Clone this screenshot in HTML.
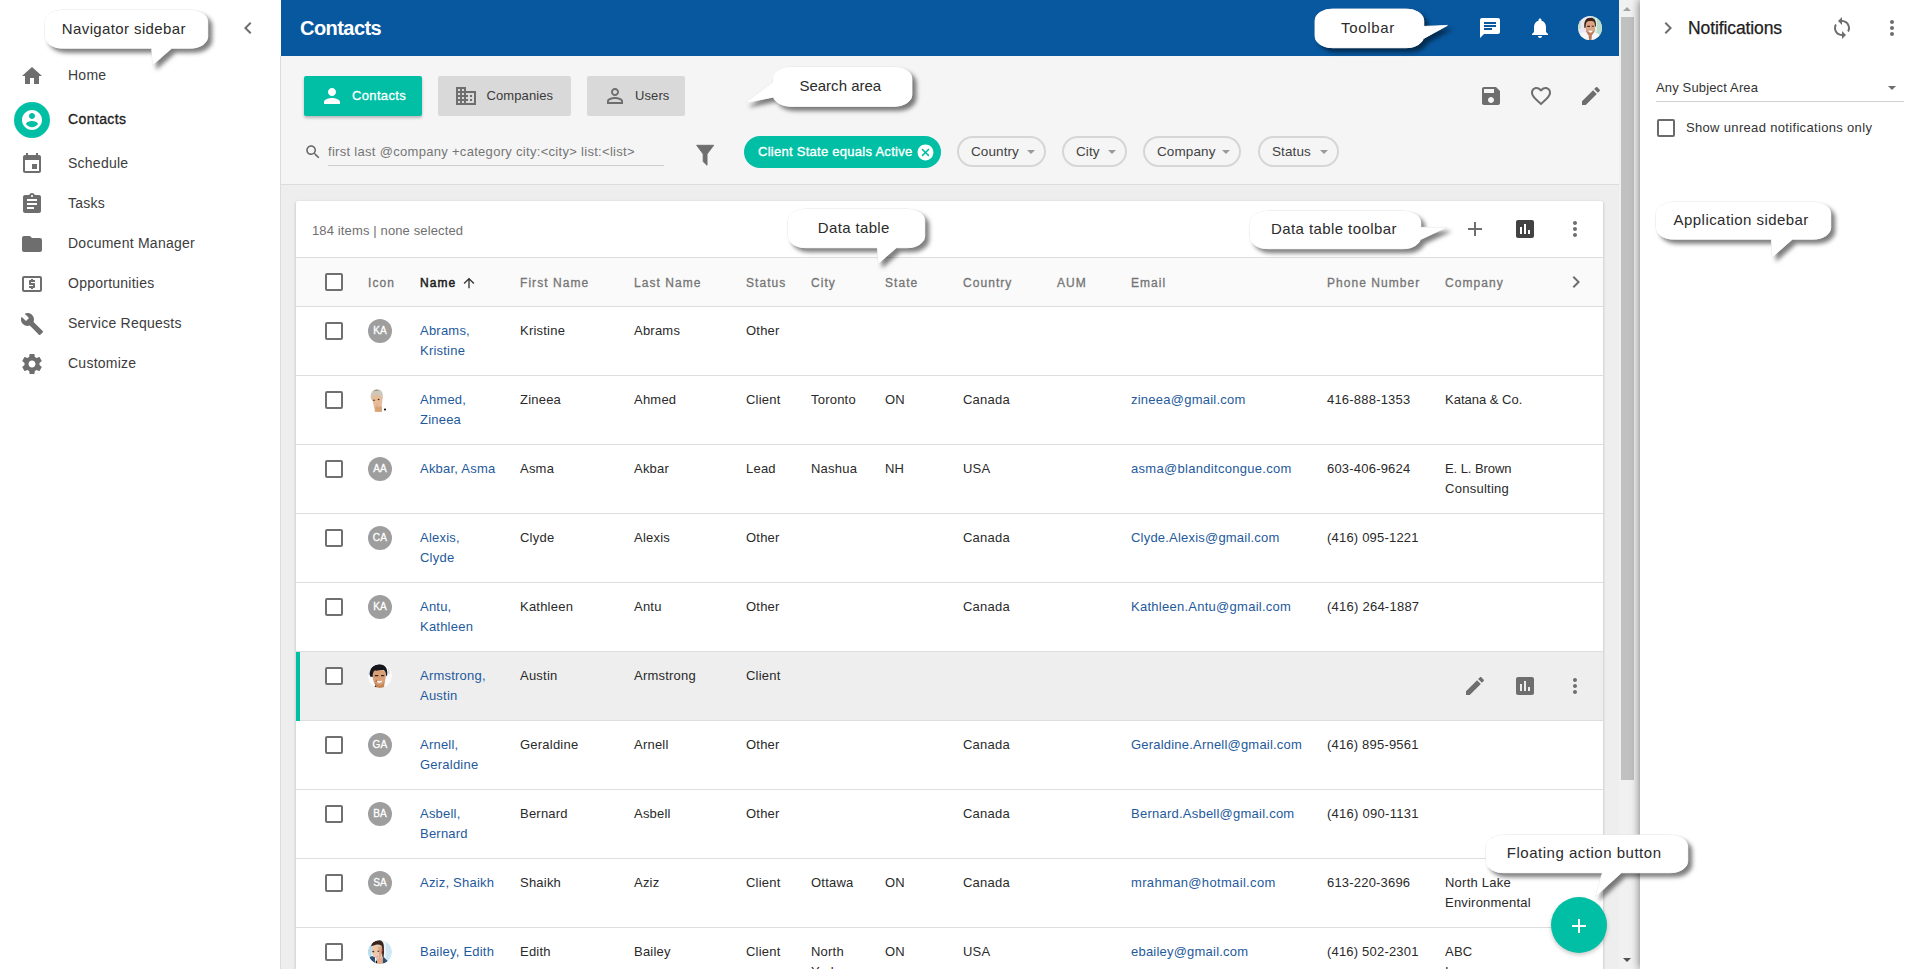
<!DOCTYPE html>
<html><head><meta charset="utf-8">
<style>
*{box-sizing:border-box;margin:0;padding:0}
html,body{width:1920px;height:969px;overflow:hidden;background:#fff;font-family:"Liberation Sans",sans-serif;color:#212121;font-size:13px}
.abs{position:absolute}
#nav{position:absolute;left:0;top:0;width:281px;height:969px;background:#fff}
#nav:after{content:"";position:absolute;left:280px;top:56px;width:1px;height:913px;background:#dcdcdc}
.ni{position:absolute;left:68px;font-size:14px;color:#3c3c3c;letter-spacing:.25px;line-height:20px;white-space:nowrap}
.nic{position:absolute;left:20px;width:24px;height:24px;fill:#6e6e6e}
#hdr{position:absolute;left:281px;top:0;width:1338px;height:56px;background:#08589f}
#hdr h1{position:absolute;left:19px;top:15px;font-size:20px;line-height:26px;font-weight:bold;color:#fff;letter-spacing:-.55px}
#search{position:absolute;left:281px;top:56px;width:1338px;height:129px;background:#f5f5f5;border-bottom:1px solid #dcdcdc}
#main{position:absolute;left:281px;top:185px;width:1338px;height:784px;background:#eeeeee}
#sb{position:absolute;left:1619px;top:0;width:21px;height:969px;background:#f1f1f1}
#sb .th{position:absolute;left:2px;top:17px;width:13px;height:763px;background:#c1c1c1}
#side{position:absolute;left:1640px;top:0;width:280px;height:969px;background:#fff;box-shadow:0 0 9px rgba(0,0,0,.55)}
.tab{position:absolute;top:20px;height:40px;border-radius:2px;font-size:13px;letter-spacing:.1px;line-height:40px;color:#3a3a3a;background:#d9d9d9;white-space:nowrap}
.tab span{position:absolute;top:0}
.tab svg{position:absolute;top:8px;width:24px;height:24px;fill:#6e6e6e}
.chip{position:absolute;top:80px;height:31px;border:2px solid #d6d6d6;border-radius:16px;font-size:13.5px;line-height:27px;color:#424242;padding-left:12px;letter-spacing:.1px;background:#f5f5f5;white-space:nowrap}
.chip i{position:absolute;right:9px;top:12px;border:4px solid transparent;border-top:4px solid #9a9a9a;border-bottom:0}
#card{position:absolute;left:296px;top:201px;width:1307px;height:768px;overflow:hidden;background:#fff;border-radius:2px 2px 0 0;box-shadow:0 1px 3px rgba(0,0,0,.25)}
#th{position:absolute;left:0;top:56px;width:1307px;height:50px;background:#fafafa;border-top:1px solid #dedede;border-bottom:1px solid #dedede}
#th span{position:absolute;top:16px;font-size:12px;line-height:18px;color:#757575;letter-spacing:1.05px;-webkit-text-stroke:.3px #757575;white-space:nowrap}
.row{position:absolute;left:0;width:1307px;height:69px;border-bottom:1px solid #dedede}
.row span{position:absolute;top:14px;font-size:13px;line-height:20px;color:#2a2a2a;letter-spacing:.22px}
.row span.l{color:#1e5a9c}
.cb{position:absolute;left:29px;top:15px;width:18px;height:18px;border:2px solid #707070;border-radius:2px;background:#fff}
.av{position:absolute;left:72px;top:12px;width:24px;height:24px;border-radius:50%;background:#9e9e9e;color:#fff;font-size:10px;-webkit-text-stroke:.3px #fff;letter-spacing:.2px;line-height:24px;text-align:center;overflow:hidden}
.co{position:absolute;background:#fff;border-radius:12px;font-size:16px;color:#2b2b2b;text-align:center;box-shadow:3px 4px 4px rgba(0,0,0,.45),0 0 3px rgba(0,0,0,.25)}
.c1{left:72px}.c2{left:124px}.c3{left:224px}.c4{left:338px}.c5{left:450px}.c6{left:515px}.c7{left:589px}.c8{left:667px}.c9{left:761px}.c10{left:835px}.c11{left:1031px}.c12{left:1149px}
</style></head><body>
<div id="nav">
<svg class="nic" style="left:236px;top:16px" viewBox="0 0 24 24"><path d="M15.41 7.41L14 6l-6 6 6 6 1.41-1.41L10.83 12z"/></svg>
<svg class="nic" style="top:64px" viewBox="0 0 24 24"><path d="M10 20v-6h4v6h5v-8h3L12 3 2 12h3v8z"/></svg>
<div class="abs" style="left:14px;top:102px;width:36px;height:36px;border-radius:50%;background:#00bfa5"></div>
<svg class="nic" style="top:108px;fill:#fff" viewBox="0 0 24 24"><path d="M12 2C6.48 2 2 6.48 2 12s4.48 10 10 10 10-4.48 10-10S17.52 2 12 2zm0 3c1.66 0 3 1.34 3 3s-1.34 3-3 3-3-1.34-3-3 1.34-3 3-3zm0 14.2c-2.5 0-4.71-1.28-6-3.22.03-1.99 4-3.08 6-3.08 1.99 0 5.97 1.09 6 3.08-1.29 1.94-3.5 3.22-6 3.22z"/></svg>
<svg class="nic" style="top:152px" viewBox="0 0 24 24"><path d="M17 12h-5v5h5v-5zM16 1v2H8V1H6v2H5c-1.11 0-1.99.9-1.99 2L3 19c0 1.1.89 2 2 2h14c1.1 0 2-.9 2-2V5c0-1.1-.9-2-2-2h-1V1h-2zm3 18H5V8h14v11z"/></svg>
<svg class="nic" style="top:192px" viewBox="0 0 24 24"><path d="M19 3h-4.18C14.4 1.84 13.3 1 12 1c-1.3 0-2.4.84-2.82 2H5c-1.1 0-2 .9-2 2v14c0 1.1.9 2 2 2h14c1.1 0 2-.9 2-2V5c0-1.1-.9-2-2-2zm-7 0c.55 0 1 .45 1 1s-.45 1-1 1-1-.45-1-1 .45-1 1-1zm2 14H7v-2h7v2zm3-4H7v-2h10v2zm0-4H7V7h10v2z"/></svg>
<svg class="nic" style="top:232px" viewBox="0 0 24 24"><path d="M10 4H4c-1.1 0-1.99.9-1.99 2L2 18c0 1.1.9 2 2 2h16c1.1 0 2-.9 2-2V8c0-1.1-.9-2-2-2h-8l-2-2z"/></svg>
<svg class="nic" style="top:272px" viewBox="0 0 24 24"><path d="M11 17h2v-1h1c.55 0 1-.45 1-1v-3c0-.55-.45-1-1-1h-3v-1h4V8h-2V7h-2v1h-1c-.55 0-1 .45-1 1v3c0 .55.45 1 1 1h3v1H9v2h2v1zm9-13H4c-1.11 0-1.99.89-1.99 2L2 18c0 1.11.89 2 2 2h16c1.11 0 2-.89 2-2V6c0-1.11-.89-2-2-2zm0 14H4V6h16v12z"/></svg>
<svg class="nic" style="top:312px" viewBox="0 0 24 24"><path d="M22.7 19l-9.1-9.1c.9-2.3.4-5-1.5-6.9-2-2-5-2.4-7.4-1.3L9 6 6 9 1.6 4.7C.4 7.1.9 10.1 2.9 12.1c1.9 1.9 4.6 2.4 6.9 1.5l9.1 9.1c.4.4 1 .4 1.4 0l2.3-2.3c.5-.4.5-1.1.1-1.4z"/></svg>
<svg class="nic" style="top:352px" viewBox="0 0 24 24"><path d="M19.43 12.98c.04-.32.07-.64.07-.98s-.03-.66-.07-.98l2.11-1.65c.19-.15.24-.42.12-.64l-2-3.46c-.12-.22-.39-.3-.61-.22l-2.49 1c-.52-.4-1.08-.73-1.69-.98l-.38-2.65C14.46 2.18 14.25 2 14 2h-4c-.25 0-.46.18-.49.42l-.38 2.65c-.61.25-1.17.59-1.69.98l-2.49-1c-.23-.09-.49 0-.61.22l-2 3.46c-.13.22-.07.49.12.64l2.11 1.65c-.04.32-.07.65-.07.98s.03.66.07.98l-2.11 1.65c-.19.15-.24.42-.12.64l2 3.46c.12.22.39.3.61.22l2.49-1c.52.4 1.08.73 1.69.98l.38 2.65c.03.24.24.42.49.42h4c.25 0 .46-.18.49-.42l.38-2.65c.61-.25 1.17-.59 1.69-.98l2.49 1c.23.09.49 0 .61-.22l2-3.46c.12-.22.07-.49-.12-.64l-2.11-1.65zM12 15.5c-1.93 0-3.5-1.57-3.5-3.5s1.57-3.5 3.5-3.5 3.5 1.57 3.5 3.5-1.57 3.5-3.5 3.5z"/></svg>
<div class="ni" style="top:65px">Home</div>
<div class="ni" style="top:109px;color:#1f1f1f;letter-spacing:.4px;-webkit-text-stroke:.35px #1f1f1f">Contacts</div>
<div class="ni" style="top:153px">Schedule</div>
<div class="ni" style="top:193px">Tasks</div>
<div class="ni" style="top:233px">Document Manager</div>
<div class="ni" style="top:273px">Opportunities</div>
<div class="ni" style="top:313px">Service Requests</div>
<div class="ni" style="top:353px">Customize</div>
</div>
<div id="hdr"><h1>Contacts</h1>
<svg class="abs" style="left:1197px;top:16px;width:24px;height:24px;fill:#fff" viewBox="0 0 24 24"><path d="M20 2H4c-1.1 0-1.99.9-1.99 2L2 22l4-4h14c1.1 0 2-.9 2-2V4c0-1.1-.9-2-2-2zM6 9h12v2H6V9zm8 5H6v-2h8v2zm4-6H6V6h12v2z"/></svg>
<svg class="abs" style="left:1247px;top:16px;width:24px;height:24px;fill:#fff" viewBox="0 0 24 24"><path d="M12 22c1.1 0 2-.9 2-2h-4c0 1.1.89 2 2 2zm6-6v-5c0-3.07-1.64-5.64-4.5-6.32V4c0-.83-.67-1.5-1.5-1.5s-1.5.67-1.5 1.5v.68C7.63 5.36 6 7.92 6 11v5l-2 2v1h16v-1l-2-2z"/></svg>
<svg class="abs" style="left:1297px;top:16px;width:24px;height:24px" viewBox="0 0 24 24"><defs><clipPath id="avc"><circle cx="12" cy="12" r="12"/></clipPath><filter id="b0" x="-20%" y="-20%" width="140%" height="140%"><feGaussianBlur stdDeviation=".45"/></filter></defs><g clip-path="url(#avc)"><rect width="24" height="24" fill="#ece8f1"/><g filter="url(#b0)"><rect x="14" y="0" width="10" height="20" fill="#b9dccb"/><rect x="0" y="3" width="2.500" height="10" fill="#c5e2c0"/><rect x="17" y="2" width="2" height="14" fill="#d9ede3"/><path d="M0 24c0-5 3-8 8-8l4 4 3-4c4 0 7 2 8 8z" fill="#f7f6f8"/><path d="M10.500 18h3.500l-.5 6h-2.500z" fill="#b77a5c"/><path d="M7.400 9c0-3 2-4.500 5-4.500s4.800 1.500 4.800 4.500c0 4-.5 6-1.500 8-1 1.800-2.200 2.500-3.500 2.500s-2.500-1-3.500-3c-.8-2-1.300-4-1.300-7.500z" fill="#dba585"/><path d="M8 13.500c.5 3 2 6 4.200 6s3.500-2.500 4.300-6c-.8 2-2.300 3-4.300 3s-3.400-1-4.200-3z" fill="#b97b5e"/><path d="M6.300 11.500C5.800 5 8 1.800 12.300 1.800c4 0 6.200 2.500 5.600 9l-.9-.5c0-3-.8-4.500-2-5-1.500-.3-4-.3-5.500.2-1.500.8-1.800 2.500-1.800 5.500l-.7 1.200z" fill="#3b2219"/><path d="M9.300 9.800h2.600v1.100H9.300zM13.800 9.800h2v1h-2z" fill="#3a1f18"/><path d="M10.600 14.800h3.900c-.3 1.300-1 1.800-2 1.800s-1.600-.5-1.900-1.800z" fill="#fff"/></g></g></svg>
</div>
<div id="search">
<div class="tab" style="left:23px;width:118px;background:#00bfa5;color:#fff;box-shadow:0 2px 3px rgba(0,0,0,.25)"><svg style="left:16px;fill:#fff" viewBox="0 0 24 24"><path d="M12 12c2.210 0 4-1.790 4-4s-1.790-4-4-4-4 1.790-4 4 1.790 4 4 4zm0 2c-2.670 0-8 1.340-8 4v2h16v-2c0-2.660-5.330-4-8-4z"/></svg><span style="left:48px;letter-spacing:.35px;-webkit-text-stroke:.3px #fff">Contacts</span></div>
<div class="tab" style="left:157px;width:133px"><svg style="left:16px" viewBox="0 0 24 24"><path d="M12 7V3H2v18h20V7H12zM6 19H4v-2h2v2zm0-4H4v-2h2v2zm0-4H4V9h2v2zm0-4H4V5h2v2zm4 12H8v-2h2v2zm0-4H8v-2h2v2zm0-4H8V9h2v2zm0-4H8V5h2v2zm10 12h-8v-2h2v-2h-2v-2h2v-2h-2V9h8v10zm-2-8h-2v2h2v-2zm0 4h-2v2h2v-2z"/></svg><span style="left:48.5px">Companies</span></div>
<div class="tab" style="left:306px;width:98px"><svg style="left:16px" viewBox="0 0 24 24"><path d="M12 5.900c1.160 0 2.100.940 2.100 2.100s-.940 2.100-2.100 2.100S9.900 9.160 9.900 8s.940-2.100 2.100-2.100m0 9c2.970 0 6.100 1.460 6.100 2.100v1.100H5.900V17c0-.640 3.130-2.100 6.100-2.100M12 4C9.790 4 8 5.790 8 8s1.790 4 4 4 4-1.790 4-4-1.790-4-4-4zm0 9c-2.670 0-8 1.340-8 4v3h16v-3c0-2.660-5.330-4-8-4z"/></svg><span style="left:48px">Users</span></div>
<svg class="abs" style="left:1198px;top:28px;width:24px;height:24px;fill:#6e6e6e" viewBox="0 0 24 24"><path d="M17 3H5c-1.110 0-2 .900-2 2v14c0 1.100.890 2 2 2h14c1.100 0 2-.900 2-2V7l-4-4zm-5 16c-1.660 0-3-1.340-3-3s1.340-3 3-3 3 1.340 3 3-1.340 3-3 3zm3-10H5V5h10v4z"/></svg>
<svg class="abs" style="left:1248px;top:28px;width:24px;height:24px;fill:#6e6e6e" viewBox="0 0 24 24"><path d="M16.500 3c-1.740 0-3.410.810-4.500 2.090C10.910 3.810 9.240 3 7.500 3 4.420 3 2 5.420 2 8.500c0 3.780 3.400 6.860 8.550 11.540L12 21.350l1.450-1.320C18.600 15.360 22 12.280 22 8.500 22 5.420 19.580 3 16.500 3zm-4.400 15.550l-.1.100-.1-.1C7.140 14.240 4 11.390 4 8.500 4 6.500 5.500 5 7.500 5c1.540 0 3.040.990 3.570 2.360h1.870C13.460 5.990 14.960 5 16.500 5c2 0 3.500 1.500 3.500 3.500 0 2.890-3.140 5.740-7.900 10.050z"/></svg>
<svg class="abs" style="left:1298px;top:28px;width:24px;height:24px;fill:#6e6e6e" viewBox="0 0 24 24"><path d="M3 17.250V21h3.750L17.810 9.940l-3.750-3.750L3 17.250zM20.710 7.040c.390-.390.390-1.020 0-1.410l-2.340-2.340c-.390-.390-1.020-.390-1.410 0l-1.830 1.830 3.750 3.750 1.830-1.830z"/></svg>
<svg class="abs" style="left:22.5px;top:86.5px;width:18px;height:18px;fill:#666" viewBox="0 0 24 24"><path d="M15.500 14h-.790l-.280-.270C15.410 12.590 16 11.110 16 9.500 16 5.910 13.090 3 9.500 3S3 5.910 3 9.500 5.910 16 9.500 16c1.610 0 3.090-.590 4.230-1.570l.270.280v.790l5 4.990L20.490 19l-4.990-5zm-6 0C7.010 14 5 11.990 5 9.500S7.010 5 9.500 5 14 7.010 14 9.500 11.990 14 9.500 14z"/></svg>
<div class="abs" style="left:47px;top:86px;font-size:13px;line-height:20px;color:#757575;letter-spacing:.3px;white-space:nowrap">first last @company +category city:&lt;city&gt; list:&lt;list&gt;</div>
<div class="abs" style="left:47px;top:109px;width:336px;height:1px;background:#cdcdcd"></div>
<svg class="abs" style="left:414px;top:88px;width:20px;height:22px" viewBox="0 0 20 22"><path d="M1.700 1.300H18.700L12 10V21.200L8.200 17.600V10Z" fill="#6e6e6e" stroke="#6e6e6e" stroke-width="1" stroke-linejoin="round"/></svg>
<div class="abs" style="left:463px;top:80px;width:197px;height:32px;border-radius:16px;background:#00bfa5"></div>
<div class="abs" style="left:477px;top:86px;font-size:13px;line-height:20px;color:#fff;letter-spacing:.27px;white-space:nowrap;-webkit-text-stroke:.35px #fff">Client State equals Active</div>
<svg class="abs" style="left:634.8px;top:86.5px;width:19px;height:19px;fill:#fff" viewBox="0 0 24 24"><path d="M12 2C6.470 2 2 6.470 2 12s4.470 10 10 10 10-4.470 10-10S17.530 2 12 2zm5 13.590L15.590 17 12 13.410 8.410 17 7 15.590 10.590 12 7 8.410 8.410 7 12 10.590 15.590 7 17 8.410 13.410 12 17 15.590z"/></svg>
<div class="chip" style="left:676px;width:89px">Country<i></i></div>
<div class="chip" style="left:781px;width:65px">City<i></i></div>
<div class="chip" style="left:862px;width:98px">Company<i></i></div>
<div class="chip" style="left:977px;width:81px">Status<i></i></div>
</div>
<div id="main"></div>
<div id="card">
<div class="abs" style="left:16px;top:20px;font-size:13px;line-height:20px;color:#707070;letter-spacing:.13px;white-space:nowrap">184 items | none selected</div>
<svg class="abs" style="left:1167px;top:16px;width:24px;height:24px;fill:#6e6e6e" viewBox="0 0 24 24"><path d="M19 13h-6v6h-2v-6H5v-2h6V5h2v6h6v2z"/></svg><svg class="abs" style="left:1217px;top:16px;width:24px;height:24px;fill:#424242" viewBox="0 0 24 24"><path d="M19 3H5c-1.100 0-2 .900-2 2v14c0 1.100.900 2 2 2h14c1.100 0 2-.900 2-2V5c0-1.100-.900-2-2-2zM9 17H7v-7h2v7zm4 0h-2V7h2v10zm4 0h-2v-4h2v4z"/></svg><svg class="abs" style="left:1267px;top:16px;width:24px;height:24px;fill:#6e6e6e" viewBox="0 0 24 24"><path d="M12 8c1.100 0 2-.900 2-2s-.900-2-2-2-2 .900-2 2 .900 2 2 2zm0 2c-1.100 0-2 .900-2 2s.900 2 2 2 2-.900 2-2-.900-2-2-2zm0 6c-1.100 0-2 .900-2 2s.900 2 2 2 2-.900 2-2-.900-2-2-2z"/></svg>
<div id="th"><div class="cb" style="top:15px"></div>
<span class="c1">Icon</span>
<span class="c2" style="color:#212121;-webkit-text-stroke:.5px #212121">Name</span>
<span class="c3">First Name</span>
<span class="c4">Last Name</span>
<span class="c5">Status</span>
<span class="c6">City</span>
<span class="c7">State</span>
<span class="c8">Country</span>
<span class="c9">AUM</span>
<span class="c10">Email</span>
<span class="c11">Phone Number</span>
<span class="c12">Company</span>
<svg class="abs" style="left:165px;top:17px;width:16px;height:16px;fill:#333" viewBox="0 0 24 24"><path d="M4 12l1.410 1.410L11 7.830V20h2V7.830l5.580 5.590L20 12l-8-8-8 8z"/></svg>
<svg class="abs" style="left:1268px;top:12px;width:24px;height:24px;fill:#6e6e6e" viewBox="0 0 24 24"><path d="M10 6L8.590 7.410 13.170 12l-4.580 4.590L10 18l6-6z"/></svg>
</div>
<div class="row" style="top:106px">
<div class="cb"></div>
<div class="av">KA</div>
<span class="c2 l">Abrams,<br>Kristine</span>
<span class="c3">Kristine</span>
<span class="c4">Abrams</span>
<span class="c5">Other</span>
</div>
<div class="row" style="top:175px">
<div class="cb"></div>
<svg class="av" style="background:none;border-radius:0" viewBox="0 0 24 24"><defs><filter id="b1" x="-20%" y="-20%" width="140%" height="140%"><feGaussianBlur stdDeviation=".45"/></filter></defs><g filter="url(#b1)"><path d="M3 11C1.500 5 5 1 9 1.200c4-.5 6.500 3.300 5.800 8.800l-1.500 3-8.300.5z" fill="#cfc8ba"/><path d="M5.500 3.500C7 1.500 10 1.300 11.500 2.500c-2-.3-4 .2-6 1z" fill="#8d8882"/><path d="M4.600 10c0-2.500 2-3.500 5-3 2.500.3 4.700 1.200 4.700 3.500 0 4-.3 6-.8 8.500l.5 4.800H6.800c0-3-2.200-8.300-2.200-13.800z" fill="#e6bd98"/><path d="M7.500 18c2 1 4.500 1 6-.2l.5 6H7z" fill="#d7a376"/><ellipse cx="6" cy="12.300" rx="1.300" ry=".8" fill="#7a5535"/><ellipse cx="10.600" cy="11.500" rx=".9" ry=".8" fill="#4a1f1a"/><path d="M8.200 15.500c.8.600 1.500.700 2.200.100l-.4 2.200c-.7.300-1.200.2-1.800-.3z" fill="#e9a9a0"/></g><circle cx="17" cy="21.500" r="1.100" fill="#0a0a0a"/></svg>
<span class="c2 l">Ahmed,<br>Zineea</span>
<span class="c3">Zineea</span>
<span class="c4">Ahmed</span>
<span class="c5">Client</span>
<span class="c6">Toronto</span>
<span class="c7">ON</span>
<span class="c8">Canada</span>
<span class="c10 l"><b style="font-weight:normal;letter-spacing:0.237px">zineea@gmail.com</b></span>
<span class="c11"><b style="font-weight:normal;letter-spacing:0.203px">416-888-1353</b></span>
<span class="c12"><b style="font-weight:normal;letter-spacing:-0.003px">Katana &amp; Co.</b></span>
</div>
<div class="row" style="top:244px">
<div class="cb"></div>
<div class="av">AA</div>
<span class="c2 l">Akbar, Asma</span>
<span class="c3">Asma</span>
<span class="c4">Akbar</span>
<span class="c5">Lead</span>
<span class="c6">Nashua</span>
<span class="c7">NH</span>
<span class="c8">USA</span>
<span class="c10 l"><b style="font-weight:normal;letter-spacing:0.299px">asma@blanditcongue.com</b></span>
<span class="c11"><b style="font-weight:normal;letter-spacing:0.203px">603-406-9624</b></span>
<span class="c12"><b style="font-weight:normal;letter-spacing:-0.070px">E. L. Brown</b><br><b style="font-weight:normal;letter-spacing:0.262px">Consulting</b></span>
</div>
<div class="row" style="top:313px">
<div class="cb"></div>
<div class="av">CA</div>
<span class="c2 l">Alexis,<br>Clyde</span>
<span class="c3">Clyde</span>
<span class="c4">Alexis</span>
<span class="c5">Other</span>
<span class="c8">Canada</span>
<span class="c10 l"><b style="font-weight:normal;letter-spacing:0.206px">Clyde.Alexis@gmail.com</b></span>
<span class="c11"><b style="font-weight:normal;letter-spacing:0.200px">(416) 095-1221</b></span>
</div>
<div class="row" style="top:382px">
<div class="cb"></div>
<div class="av">KA</div>
<span class="c2 l">Antu,<br>Kathleen</span>
<span class="c3">Kathleen</span>
<span class="c4">Antu</span>
<span class="c5">Other</span>
<span class="c8">Canada</span>
<span class="c10 l"><b style="font-weight:normal;letter-spacing:0.263px">Kathleen.Antu@gmail.com</b></span>
<span class="c11"><b style="font-weight:normal;letter-spacing:0.246px">(416) 264-1887</b></span>
</div>
<div class="row" style="top:451px;background:#eeeeee">
<div class="abs" style="left:0;top:0;width:4px;height:69px;background:#00bfa5"></div>
<div class="cb"></div>
<svg class="av" style="background:none" viewBox="0 0 24 24"><defs><clipPath id="c2"><circle cx="12" cy="12" r="12"/></clipPath><filter id="b2" x="-20%" y="-20%" width="140%" height="140%"><feGaussianBlur stdDeviation=".45"/></filter></defs><g clip-path="url(#c2)"><rect width="24" height="24" fill="#fbfbfd"/><g filter="url(#b2)"><path d="M20 4c1.500 1.500 2 4 1.500 6l-1.500-.5z" fill="#d9d4d6"/><path d="M0 10l2-4v5z" fill="#b9c6d6"/><path d="M4.400 10c0-3 3-4.300 7-4.300s6.300 1.300 6.300 4.300c0 6-1 9-2 11.500l.3 3H7.500l.3-3c-1.700-2.500-3.400-6-3.400-11.500z" fill="#d9a077"/><path d="M6.500 17c1.500 3 3.500 4 5.500 4s3.500-1.500 4.500-4l-.5 7.500H7.500z" fill="#c48759"/><path d="M2 12.500C1 5 4.500 .3 11 .3c5.500 0 9 3.200 8.200 10.700l-1.300 1.500c.3-4-1-6.500-3-6.500-3 0-6.500 1-8 .5-1.700.5-2.200 3-2.200 6.500z" fill="#15171c"/><path d="M6.800 11h3.500v1.300H6.800zM13 11h3.300v1.200H13z" fill="#3a2018"/><path d="M8.500 16.800c1.200.6 4.300.6 5.800-.2-.3 1.500-1.600 2.200-3 2.200s-2.500-.7-2.800-2z" fill="#fff"/><path d="M8 15.500c.3 1 .6 1.500 1.200 1.800l-1.500 .5z" fill="#5a3020"/><path d="M6.500 22.500l1.500-1 .5 2.500h-2z" fill="#3a2418"/></g></g></svg>
<span class="c2 l">Armstrong,<br>Austin</span>
<span class="c3">Austin</span>
<span class="c4">Armstrong</span>
<span class="c5">Client</span>
<svg class="abs" style="left:1167px;top:22px;width:24px;height:24px;fill:#6e6e6e" viewBox="0 0 24 24"><path d="M3 17.250V21h3.750L17.810 9.940l-3.750-3.750L3 17.250zM20.710 7.040c.390-.390.390-1.020 0-1.410l-2.340-2.340c-.390-.390-1.020-.390-1.410 0l-1.830 1.830 3.750 3.750 1.830-1.830z"/></svg><svg class="abs" style="left:1217px;top:22px;width:24px;height:24px;fill:#6e6e6e" viewBox="0 0 24 24"><path d="M19 3H5c-1.100 0-2 .900-2 2v14c0 1.100.900 2 2 2h14c1.100 0 2-.900 2-2V5c0-1.100-.900-2-2-2zM9 17H7v-7h2v7zm4 0h-2V7h2v10zm4 0h-2v-4h2v4z"/></svg><svg class="abs" style="left:1267px;top:22px;width:24px;height:24px;fill:#6e6e6e" viewBox="0 0 24 24"><path d="M12 8c1.100 0 2-.900 2-2s-.900-2-2-2-2 .900-2 2 .900 2 2 2zm0 2c-1.100 0-2 .900-2 2s.900 2 2 2 2-.900 2-2-.900-2-2-2zm0 6c-1.100 0-2 .900-2 2s.900 2 2 2 2-.900 2-2-.900-2-2-2z"/></svg>
</div>
<div class="row" style="top:520px">
<div class="cb"></div>
<div class="av">GA</div>
<span class="c2 l">Arnell,<br>Geraldine</span>
<span class="c3">Geraldine</span>
<span class="c4">Arnell</span>
<span class="c5">Other</span>
<span class="c8">Canada</span>
<span class="c10 l"><b style="font-weight:normal;letter-spacing:0.206px">Geraldine.Arnell@gmail.com</b></span>
<span class="c11"><b style="font-weight:normal;letter-spacing:0.192px">(416) 895-9561</b></span>
</div>
<div class="row" style="top:589px">
<div class="cb"></div>
<div class="av">BA</div>
<span class="c2 l">Asbell,<br>Bernard</span>
<span class="c3">Bernard</span>
<span class="c4">Asbell</span>
<span class="c5">Other</span>
<span class="c8">Canada</span>
<span class="c10 l"><b style="font-weight:normal;letter-spacing:0.239px">Bernard.Asbell@gmail.com</b></span>
<span class="c11"><b style="font-weight:normal;letter-spacing:0.266px">(416) 090-1131</b></span>
</div>
<div class="row" style="top:658px">
<div class="cb"></div>
<div class="av">SA</div>
<span class="c2 l">Aziz, Shaikh</span>
<span class="c3">Shaikh</span>
<span class="c4">Aziz</span>
<span class="c5">Client</span>
<span class="c6">Ottawa</span>
<span class="c7">ON</span>
<span class="c8">Canada</span>
<span class="c10 l"><b style="font-weight:normal;letter-spacing:0.340px">mrahman@hotmail.com</b></span>
<span class="c11"><b style="font-weight:normal;letter-spacing:0.194px">613-220-3696</b></span>
<span class="c12"><b style="font-weight:normal;letter-spacing:0.234px">North Lake</b><br><b style="font-weight:normal;letter-spacing:0.208px">Environmental</b></span>
</div>
<div class="row" style="top:727px">
<div class="cb"></div>
<svg class="av" style="background:none" viewBox="0 0 24 24"><defs><clipPath id="c3"><circle cx="12" cy="12" r="12"/></clipPath><filter id="b3" x="-20%" y="-20%" width="140%" height="140%"><feGaussianBlur stdDeviation=".45"/></filter></defs><g clip-path="url(#c3)"><rect width="24" height="24" fill="#cfe8f4"/><g filter="url(#b3)"><rect x="14" y="0" width="4" height="20" fill="#e9f5fb"/><rect x="0" y="6" width="3" height="14" fill="#b4def0"/><path d="M2 17c1-.5 3-1.500 5 0l1 7H4c-1.200-2-2-4.500-2-7z" fill="#2c5278"/><path d="M14.500 16.500c2 1 4.500 3.500 6 5.500l-3 2.500h-3.500z" fill="#2f4f6f"/><path d="M7 18l1.500-1 .5 7.500H7.500z" fill="#fff"/><path d="M8.500 18c1.500.5 4.500-.5 6.500-2l-.3 8.500H8.800z" fill="#e3aa8c"/><path d="M7.800 21l1.200-.5.200 4h-1.400z" fill="#1a1210"/><path d="M3.400 10c0-3.500 2.500-5.500 5.800-5.500s5 2 5 5.500c0 4-1.200 6.500-2.700 8-1.300 1-3 1-4.500-.5C5 16 3.400 13.500 3.400 10z" fill="#ecc9ad"/><path d="M9.500 7c1.500 2 2 7 1.500 11.500 2-1.500 3.200-4.500 3.200-8.500 0-1.500-.2-2.500-.7-3.500z" fill="#dba681"/><path d="M3 6.500C4 2 7 .2 10.500.2c3 0 5 1.500 5.300 5.500.3 4 .2 8-.2 11.500l-1.500-1c.6-4 .5-8-.6-10.500-2-1.200-5-1.500-7-.5-1.300.3-2.500.8-3.500 1.300z" fill="#3b221a"/><path d="M13.500 9c.5-.3 1.200-.2 1.600.5l-.4 4.500c-.5.500-1 .3-1.300-.2z" fill="#b3122e" opacity=".55"/><ellipse cx="5.300" cy="11.600" rx="1.100" ry=".8" fill="#4a3a2c"/><ellipse cx="10.300" cy="11.300" rx="1" ry=".8" fill="#5a4030"/><ellipse cx="15" cy="12.500" rx=".9" ry="1.500" fill="#3a2a22"/><path d="M7.800 16c.8.500 2 .500 3-.2-.2 1.200-.8 1.700-1.600 1.700s-1.200-.5-1.400-1.500z" fill="#e8a0a8"/><path d="M4 13c.5 2 1.500 3.500 3 4.500-1.500-.3-2.800-1.800-3.200-3.500z" fill="#fff" opacity=".7"/></g></g></svg>
<span class="c2 l">Bailey, Edith</span>
<span class="c3">Edith</span>
<span class="c4">Bailey</span>
<span class="c5">Client</span>
<span class="c6">North<br>York</span>
<span class="c7">ON</span>
<span class="c8">USA</span>
<span class="c10 l"><b style="font-weight:normal;letter-spacing:0.216px">ebailey@gmail.com</b></span>
<span class="c11"><b style="font-weight:normal;letter-spacing:0.192px">(416) 502-2301</b></span>
<span class="c12">ABC<br>Inc.</span>
</div>
</div>
<div id="sb"><div class="th"></div>
<i class="abs" style="left:4px;top:7px;border:4px solid transparent;border-bottom:4px solid #a3a3a3;border-top:0"></i>
<i class="abs" style="left:4px;top:958px;border:4px solid transparent;border-top:4px solid #505050;border-bottom:0"></i>
</div>
<div id="side">
<svg class="abs" style="left:16px;top:16px;width:24px;height:24px;fill:#6e6e6e" viewBox="0 0 24 24"><path d="M10 6L8.590 7.410 13.170 12l-4.580 4.590L10 18l6-6z"/></svg>
<div class="abs" style="left:48px;top:16px;font-size:17.500px;line-height:24px;color:#212121;letter-spacing:-.1px;-webkit-text-stroke:.25px #212121;white-space:nowrap">Notifications</div>
<svg class="abs" style="left:190px;top:16px;width:24px;height:24px;fill:#6e6e6e" viewBox="0 0 24 24"><path d="M12 4V1L8 5l4 4V6c3.310 0 6 2.690 6 6 0 1.010-.250 1.970-.700 2.800l1.460 1.460C19.540 15.030 20 13.570 20 12c0-4.420-3.580-8-8-8zm0 14c-3.310 0-6-2.690-6-6 0-1.010.250-1.970.700-2.800L5.240 7.740C4.460 8.970 4 10.430 4 12c0 4.420 3.580 8 8 8v3l4-4-4-4v3z"/></svg>
<svg class="abs" style="left:240px;top:16px;width:24px;height:24px;fill:#6e6e6e" viewBox="0 0 24 24"><path d="M12 8c1.100 0 2-.900 2-2s-.900-2-2-2-2 .900-2 2 .900 2 2 2zm0 2c-1.100 0-2 .900-2 2s.900 2 2 2 2-.900 2-2-.900-2-2-2zm0 6c-1.100 0-2 .900-2 2s.900 2 2 2 2-.900 2-2-.900-2-2-2z"/></svg>
<div class="abs" style="left:16px;top:78px;font-size:13px;line-height:20px;color:#333;letter-spacing:.15px;white-space:nowrap">Any Subject Area</div>
<i class="abs" style="left:248px;top:86px;border:4px solid transparent;border-top:4px solid #6e6e6e;border-bottom:0"></i>
<div class="abs" style="left:16px;top:101px;width:248px;height:1px;background:#d0d0d0"></div>
<div class="abs" style="left:17px;top:119px;width:18px;height:18px;border:2px solid #6b6b6b;border-radius:2px"></div>
<div class="abs" style="left:46px;top:118px;font-size:13px;line-height:20px;color:#333;letter-spacing:.33px;white-space:nowrap">Show unread notifications only</div>
</div>
<div class="abs" style="left:1551px;top:897px;width:56px;height:56px;border-radius:50%;background:#00bfa5;box-shadow:0 2px 4px rgba(0,0,0,.22)"></div>
<svg class="abs" style="left:1567px;top:914px;width:24px;height:24px;fill:#fff" viewBox="0 0 24 24"><path d="M19 13h-6v6h-2v-6H5v-2h6V5h2v6h6v2z"/></svg>
<svg class="abs" style="left:4.800000000000004px;top:-29.9px;overflow:visible" width="242.79999999999998" height="118.3"><path d="M57.5 40.0H185.29999999999998A17.5 11.5 0 0 1 202.79999999999998 51.5V66.8A17.5 11.5 0 0 1 185.29999999999998 78.3H166.7L147.7 94.9L146.7 78.3H57.5A17.5 11.5 0 0 1 40.0 66.8V51.5A17.5 11.5 0 0 1 57.5 40.0Z" fill="#fff" stroke="#e6e6e6" stroke-width="1" style="filter:drop-shadow(4.2px 4.2px 2px rgba(0,0,0,.5))"/><path d="M57.5 40.0H185.29999999999998A17.5 11.5 0 0 1 202.79999999999998 51.5V66.8A17.5 11.5 0 0 1 185.29999999999998 78.3H166.7L147.7 94.9L146.7 78.3H57.5A17.5 11.5 0 0 1 40.0 66.8V51.5A17.5 11.5 0 0 1 57.5 40.0Z" fill="#fff"/><text x="56.8" y="63.699999999999996" font-family="Liberation Sans" font-size="15" textLength="123.7" lengthAdjust="spacing" fill="#2b2b2b">Navigator sidebar</text></svg>
<svg class="abs" style="left:1274.6px;top:-31.4px;overflow:visible" width="188.80000000000018" height="118.8"><path d="M57.5 40.0H131.30000000000018A17.5 11.5 0 0 1 148.80000000000018 51.5V57.4L172.4 56.4L148.8 69.4V67.3A17.5 11.5 0 0 1 131.30000000000018 78.8H57.5A17.5 11.5 0 0 1 40.0 67.3V51.5A17.5 11.5 0 0 1 57.5 40.0Z" fill="#fff" stroke="#e6e6e6" stroke-width="1" style="filter:drop-shadow(4.2px 4.2px 2px rgba(0,0,0,.5))"/><path d="M57.5 40.0H131.30000000000018A17.5 11.5 0 0 1 148.80000000000018 51.5V57.4L172.4 56.4L148.8 69.4V67.3A17.5 11.5 0 0 1 131.30000000000018 78.8H57.5A17.5 11.5 0 0 1 40.0 67.3V51.5A17.5 11.5 0 0 1 57.5 40.0Z" fill="#fff"/><text x="66.0" y="64.4" font-family="Liberation Sans" font-size="15" textLength="53.2" lengthAdjust="spacing" fill="#2b2b2b">Toolbar</text></svg>
<svg class="abs" style="left:733.2px;top:26.799999999999997px;overflow:visible" width="218.9999999999999" height="119.4"><path d="M57.5 40.0H161.4999999999999A17.5 11.5 0 0 1 178.9999999999999 51.5V67.9A17.5 11.5 0 0 1 161.4999999999999 79.4H57.5A17.5 11.5 0 0 1 40.0 67.9V70.2L12.8 75.7L40.0 55.2V51.5A17.5 11.5 0 0 1 57.5 40.0Z" fill="#fff" stroke="#e6e6e6" stroke-width="1" style="filter:drop-shadow(4.2px 4.2px 2px rgba(0,0,0,.5))"/><path d="M57.5 40.0H161.4999999999999A17.5 11.5 0 0 1 178.9999999999999 51.5V67.9A17.5 11.5 0 0 1 161.4999999999999 79.4H57.5A17.5 11.5 0 0 1 40.0 67.9V70.2L12.8 75.7L40.0 55.2V51.5A17.5 11.5 0 0 1 57.5 40.0Z" fill="#fff"/><text x="66.39999999999998" y="64.2" font-family="Liberation Sans" font-size="15" textLength="81.8" lengthAdjust="spacing" fill="#2b2b2b">Search area</text></svg>
<svg class="abs" style="left:747.6px;top:168.6px;overflow:visible" width="216.79999999999995" height="118.80000000000001"><path d="M57.5 40.0H159.29999999999995A17.5 11.5 0 0 1 176.79999999999995 51.5V67.30000000000001A17.5 11.5 0 0 1 159.29999999999995 78.80000000000001H148.4L130.4 94.4L129.4 78.8H57.5A17.5 11.5 0 0 1 40.0 67.30000000000001V51.5A17.5 11.5 0 0 1 57.5 40.0Z" fill="#fff" stroke="#e6e6e6" stroke-width="1" style="filter:drop-shadow(4.2px 4.2px 2px rgba(0,0,0,.5))"/><path d="M57.5 40.0H159.29999999999995A17.5 11.5 0 0 1 176.79999999999995 51.5V67.30000000000001A17.5 11.5 0 0 1 159.29999999999995 78.80000000000001H148.4L130.4 94.4L129.4 78.8H57.5A17.5 11.5 0 0 1 40.0 67.30000000000001V51.5A17.5 11.5 0 0 1 57.5 40.0Z" fill="#fff"/><text x="69.79999999999995" y="64.20000000000002" font-family="Liberation Sans" font-size="15" textLength="71.6" lengthAdjust="spacing" fill="#2b2b2b">Data table</text></svg>
<svg class="abs" style="left:1209.6px;top:170.6px;overflow:visible" width="250.80000000000018" height="117.80000000000001"><path d="M57.5 40.0H193.30000000000018A17.5 11.5 0 0 1 210.80000000000018 51.5V56.4L236.4 56.4L210.8 68.4V66.30000000000001A17.5 11.5 0 0 1 193.30000000000018 77.80000000000001H57.5A17.5 11.5 0 0 1 40.0 66.30000000000001V51.5A17.5 11.5 0 0 1 57.5 40.0Z" fill="#fff" stroke="#e6e6e6" stroke-width="1" style="filter:drop-shadow(4.2px 4.2px 2px rgba(0,0,0,.5))"/><path d="M57.5 40.0H193.30000000000018A17.5 11.5 0 0 1 210.80000000000018 51.5V56.4L236.4 56.4L210.8 68.4V66.30000000000001A17.5 11.5 0 0 1 193.30000000000018 77.80000000000001H57.5A17.5 11.5 0 0 1 40.0 66.30000000000001V51.5A17.5 11.5 0 0 1 57.5 40.0Z" fill="#fff"/><text x="61.0" y="63.20000000000002" font-family="Liberation Sans" font-size="15" textLength="125.4" lengthAdjust="spacing" fill="#2b2b2b">Data table toolbar</text></svg>
<svg class="abs" style="left:1615.6px;top:161.6px;overflow:visible" width="254.80000000000018" height="117.30000000000001"><path d="M57.5 40.0H197.30000000000018A17.5 11.5 0 0 1 214.80000000000018 51.5V65.80000000000001A17.5 11.5 0 0 1 197.30000000000018 77.30000000000001H176.4L156.4 94.9L155.4 77.3H57.5A17.5 11.5 0 0 1 40.0 65.80000000000001V51.5A17.5 11.5 0 0 1 57.5 40.0Z" fill="#fff" stroke="#e6e6e6" stroke-width="1" style="filter:drop-shadow(4.2px 4.2px 2px rgba(0,0,0,.5))"/><path d="M57.5 40.0H197.30000000000018A17.5 11.5 0 0 1 214.80000000000018 51.5V65.80000000000001A17.5 11.5 0 0 1 197.30000000000018 77.30000000000001H176.4L156.4 94.9L155.4 77.3H57.5A17.5 11.5 0 0 1 40.0 65.80000000000001V51.5A17.5 11.5 0 0 1 57.5 40.0Z" fill="#fff"/><text x="57.600000000000136" y="63.20000000000002" font-family="Liberation Sans" font-size="15" textLength="134.7" lengthAdjust="spacing" fill="#2b2b2b">Application sidebar</text></svg>
<svg class="abs" style="left:1445.6px;top:794.6px;overflow:visible" width="281.8000000000002" height="117.79999999999995"><path d="M57.5 40.0H224.30000000000018A17.5 11.5 0 0 1 241.80000000000018 51.5V66.29999999999995A17.5 11.5 0 0 1 224.30000000000018 77.79999999999995H175.4L149.4 101.4L156.4 77.8H57.5A17.5 11.5 0 0 1 40.0 66.29999999999995V51.5A17.5 11.5 0 0 1 57.5 40.0Z" fill="#fff" stroke="#e6e6e6" stroke-width="1" style="filter:drop-shadow(4.2px 4.2px 2px rgba(0,0,0,.5))"/><path d="M57.5 40.0H224.30000000000018A17.5 11.5 0 0 1 241.80000000000018 51.5V66.29999999999995A17.5 11.5 0 0 1 224.30000000000018 77.79999999999995H175.4L149.4 101.4L156.4 77.8H57.5A17.5 11.5 0 0 1 40.0 66.29999999999995V51.5A17.5 11.5 0 0 1 57.5 40.0Z" fill="#fff"/><text x="60.80000000000018" y="63.19999999999993" font-family="Liberation Sans" font-size="15" textLength="154.2" lengthAdjust="spacing" fill="#2b2b2b">Floating action button</text></svg>
</body></html>
